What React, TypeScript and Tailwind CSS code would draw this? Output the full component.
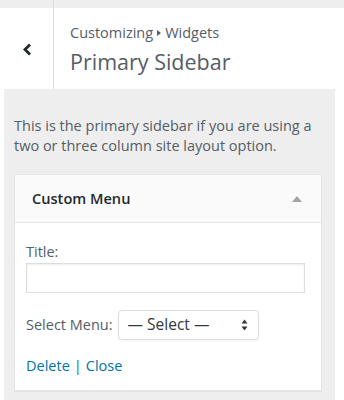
export default function App() {
  return (
    <div
      className="w-[344px] h-[400px] bg-white flex flex-col overflow-hidden"
      style={{ fontFamily: '"Open Sans", "Noto Sans", sans-serif' }}
    >
      {/* previous section strip */}
      <div className="h-[8px] bg-[#eeeeee] flex">
        <div className="w-[54px] border-r border-[#dddddd]" />
      </div>

      {/* section header */}
      <div className="h-[81px] bg-white flex">
        <button
          type="button"
          className="w-[54px] border-r border-[#dddddd] flex items-center justify-center text-[#23282d]"
        >
          <svg width="11" height="13" viewBox="0 0 11 13" className="ml-[1px] mt-[1px]">
            <polyline
              points="8,1.5 3,6.5 8,11.5"
              fill="none"
              stroke="currentColor"
              strokeWidth="2.8"
              strokeLinecap="butt"
              strokeLinejoin="miter"
            />
          </svg>
        </button>
        <div className="pl-[16px] pt-[15px] text-[#555d66]">
          <div className="flex items-center text-[14.5px] leading-[20px]">
            <span>Customizing</span>
            <svg width="10" height="8" viewBox="0 0 10 8" className="mx-[1px]">
              <polygon points="3,1 7,4 3,7" fill="#555d66" />
            </svg>
            <span>Widgets</span>
          </div>
          <div className="text-[21.5px] leading-[28px] mt-[5px]">Primary Sidebar</div>
        </div>
      </div>

      {/* section body */}
      <div className="ml-[4px] w-[331px] flex-1 bg-[#eeeeee] pt-[27px] pl-[10px] pr-[10px]">
        <p className="text-[14.5px] leading-[20px] text-[#555d66]">
          This is the primary sidebar if you are using a two or three column site layout option.
        </p>

        <div className="mt-[18px] mr-[3px] bg-white border border-[#e5e5e5] shadow-[0_1px_1px_rgba(0,0,0,0.04)]">
          <div className="h-[48px] bg-[#fafafa] border-b border-[#e5e5e5] flex items-center justify-between pl-[17px] pr-[19px]">
            <span className="text-[14.6px] font-semibold text-[#23282d]">Custom Menu</span>
            <svg width="10" height="6" viewBox="0 0 10 6">
              <polygon points="5,0 10,6 0,6" fill="#a0a5aa" />
            </svg>
          </div>

          <div className="pl-[11px] pt-[19px] pb-[14px] text-[14.5px] text-[#555d66]">
            <label className="block leading-[20px]">Title:</label>
            <input
              type="text"
              className="mt-[1px] block w-[279px] h-[30px] border border-[#dddddd] shadow-[inset_0_1px_2px_rgba(0,0,0,0.07)] bg-white outline-none"
            />

            <div className="mt-[17px] flex items-center">
              <span className="leading-[20px]">Select Menu:</span>
              <div className="ml-[5px] w-[141px] h-[30px] border border-[#dddddd] rounded-[4px] bg-white flex items-center justify-between pl-[9px] pr-[10px] shadow-[0_1px_2px_rgba(0,0,0,0.05)]">
                <span className="text-[15.5px] text-[#32373c]">— Select —</span>
                <svg width="7" height="12" viewBox="0 0 7 12">
                  <polygon points="3.5,0.5 6.5,4.5 0.5,4.5" fill="#32373c" />
                  <polygon points="3.5,11.5 6.5,7.5 0.5,7.5" fill="#32373c" />
                </svg>
              </div>
            </div>

            <div className="mt-[16px] leading-[20px] text-[14.5px]">
              <a className="text-[#0073aa]">Delete</a>
              <span className="text-[#0073aa] mx-[4px]">|</span>
              <a className="text-[#0073aa]">Close</a>
            </div>
          </div>
        </div>
      </div>
    </div>
  );
}
